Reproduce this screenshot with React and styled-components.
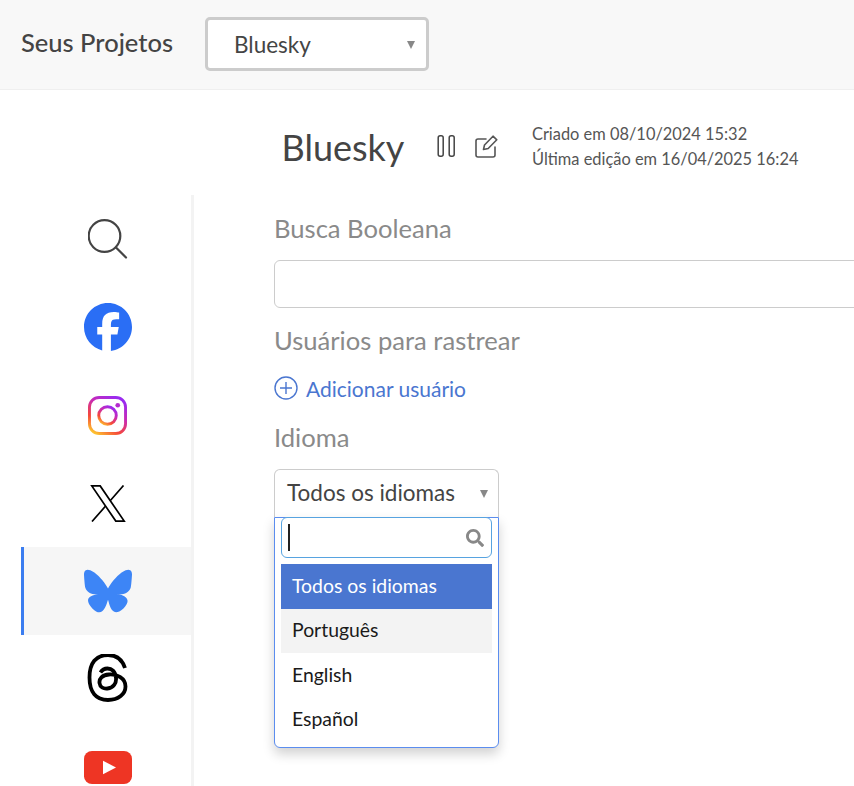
import styled, { createGlobalStyle } from "styled-components";
import { FaSearch } from "react-icons/fa";
import { SiBluesky, SiFacebook } from "react-icons/si";

const GlobalStyle = createGlobalStyle`
  html, body {
    margin: 0;
    padding: 0;
    height: 100%;
    overflow: hidden;
    background: #fff;
    font-family: Lato, "Open Sans", sans-serif;
  }
`;

const SearchIcon = () => (
  <svg width="40" height="40" viewBox="0 0 40 40" fill="none" stroke="#444" strokeWidth="2.2" strokeLinecap="round">
    <circle cx="16.5" cy="17" r="15.8" />
    <path d="M28 28.5l10 10" />
  </svg>
);

const InstagramIcon = () => (
  <svg width="39" height="39" viewBox="0 0 40 40" fill="none">
    <defs>
      <linearGradient id="ig" x1="0.15" y1="1" x2="0.75" y2="0">
        <stop offset="0" stopColor="#fdc32f" />
        <stop offset="0.3" stopColor="#f5483a" />
        <stop offset="0.65" stopColor="#c92bb4" />
        <stop offset="1" stopColor="#9a2bf0" />
      </linearGradient>
    </defs>
    <rect x="1.5" y="1.5" width="37" height="37" rx="10" stroke="url(#ig)" strokeWidth="3" />
    <circle cx="20" cy="20" r="9" stroke="url(#ig)" strokeWidth="3" />
    <circle cx="30.5" cy="9.5" r="2.4" fill="#b52bcf" />
  </svg>
);

const XIcon = () => (
  <svg width="36" height="37" viewBox="0 0 36 37" fill="none" stroke="#000" strokeWidth="1.7">
    <path d="M1.8 0.9h8.4l24 35.2h-8.4z" />
    <path d="M33.5 0.5L20.6 15.2M15.4 21.3L2 36.5" />
  </svg>
);

const ThreadsIcon = () => (
  <svg width="41" height="50" viewBox="0 1.5 41 50" fill="none" stroke="#000" strokeWidth="3.8">
    <path d="M38 15.5C35 6.5 29 2.5 21 2.5 9 2.5 2.5 10.5 2.5 25 2.5 39.5 9 47.5 21 47.5 31.5 47.5 38.5 41.5 38.5 34 38.5 25.5 30 21.5 22 22 15 22.5 12 26.5 12.5 30.5 13 34.5 16.5 36.5 20.5 36 26.5 35.5 29.5 30.5 29 25.5 28.5 18.5 24.5 16 20.5 16 17.5 16 15 17.5 13.5 20" />
  </svg>
);

const YoutubeIcon = () => (
  <svg width="48" height="33" viewBox="0 0 48 34" preserveAspectRatio="none">
    <rect width="48" height="34" rx="8" fill="#ee3524" />
    <path d="M19 10l13 7-13 7z" fill="#fff" />
  </svg>
);

const PauseIcon = () => (
  <svg width="19" height="22" viewBox="0 0 19 22" fill="none" stroke="#444" strokeWidth="1.5">
    <rect x="1.2" y="0.8" width="5" height="20.4" rx="2" />
    <rect x="12.2" y="0.8" width="5" height="20.4" rx="2" />
  </svg>
);

const EditIcon = () => (
  <svg width="23" height="23" viewBox="0 0 23 23" fill="none" stroke="#555" strokeWidth="1.6" strokeLinejoin="round" strokeLinecap="round">
    <path d="M11 4H3a2 2 0 0 0-2 2v14a2 2 0 0 0 2 2h15a2 2 0 0 0 2-2v-8" />
    <path d="M8.5 14.5l1-4.500L18 1.2l3.800 3.600-8.600 8.700z" />
  </svg>
);

const PlusIcon = () => (
  <svg width="24" height="24" viewBox="0 0 24 24" fill="none" stroke="#4a76d0" strokeWidth="1.4">
    <circle cx="12" cy="12" r="11" />
    <path d="M12 6v12M6 12h12" />
  </svg>
);

const TopBar = styled.header`
  height: 90px;
  box-sizing: border-box;
  padding: 17px 0 0 21px;
  display: flex;
  align-items: flex-start;
  background: #f8f8f8;
  border-bottom: 1px solid #efefef;
`;

const TopTitle = styled.div`
  width: 184px;
  font-size: 25.5px;
  font-weight: 500;
  line-height: 50px;
  color: #444;
`;

const ProjectSelect = styled.div`
  position: relative;
  width: 224px;
  height: 54px;
  box-sizing: border-box;
  padding-left: 26px;
  display: flex;
  align-items: center;
  background: #fff;
  border: 3px solid #ccc;
  border-radius: 5px;
  font-size: 22.5px;
  color: #444;
`;

const Caret = styled.span`
  position: absolute;
  right: ${(p) => p.$right}px;
  top: ${(p) => p.$top}px;
  width: 0;
  height: 0;
  border-left: 4.5px solid transparent;
  border-right: 4.5px solid transparent;
  border-top: 8px solid #888;
`;

const ProjectHeader = styled.div`
  height: 105px;
  box-sizing: border-box;
  padding: 9px 0 0 281.5px;
  display: flex;
  align-items: center;
`;

const ProjectName = styled.h1`
  margin: 0;
  width: 155px;
  font-size: 36px;
  font-weight: 400;
  color: #444;
`;

const HeaderIcons = styled.div`
  width: 95.5px;
  display: flex;
  align-items: center;
  gap: 19.5px;
  margin-top: -2px;
`;

const Meta = styled.div`
  font-size: 16.4px;
  line-height: 25px;
  color: #555;
  margin-top: -3px;
`;

const Body = styled.div`
  display: flex;
  align-items: flex-start;
`;

const Sidebar = styled.nav`
  width: 173px;
  height: 600px;
  margin-left: 21px;
  flex: none;
  border-right: 3px solid #f3f3f3;
  box-sizing: border-box;
`;

const SideItem = styled.div`
  height: 88px;
  display: flex;
  align-items: center;
  justify-content: center;
  box-sizing: border-box;
  border-left: 3px solid ${(p) => (p.$active ? "#3b7df0" : "transparent")};
  background: ${(p) => (p.$active ? "#f6f6f6" : "transparent")};
`;

const Main = styled.main`
  flex: 1;
  padding: 17px 0 0 80px;
  margin-right: -40px;
  min-width: 0;
`;

const FieldLabel = styled.div`
  font-size: 25.6px;
  line-height: 32px;
  color: #8a8a8a;
`;

const TextInput = styled.div`
  height: 48px;
  box-sizing: border-box;
  margin: 16px 0 16px;
  border: 1px solid #ccc;
  border-radius: 6px;
  background: #fff;
`;

const AddUser = styled.div`
  display: flex;
  align-items: center;
  gap: 8px;
  margin: 20px 0 21px;
  height: 24px;
  font-size: 21px;
  color: #4a76d0;
`;

const LangField = styled.div`
  position: relative;
  width: 225px;
  margin-top: 16px;
`;

const LangSelect = styled.div`
  height: 48px;
  box-sizing: border-box;
  padding: 0 0 2px 12px;
  display: flex;
  align-items: center;
  border: 1px solid #ccc;
  border-bottom: none;
  border-radius: 6px 6px 0 0;
  font-size: 22.5px;
  color: #444;
`;

const Dropdown = styled.div`
  position: absolute;
  left: 0;
  right: 0;
  top: 48px;
  height: 231px;
  box-sizing: border-box;
  padding: 0 6px;
  background: #fff;
  border: 1px solid #5b8def;
  border-radius: 0 0 6px 6px;
  box-shadow: 0 6px 12px rgba(0, 0, 0, 0.18);
`;

const DropSearch = styled.div`
  height: 41px;
  box-sizing: border-box;
  margin: -1px 0 6px;
  padding: 0 7px 0 6px;
  display: flex;
  align-items: center;
  justify-content: space-between;
  background: #fff;
  border: 1px solid #57a3e0;
  border-radius: 6px;
  color: #888;
`;

const TextCursor = styled.span`
  width: 2px;
  height: 27px;
  background: #222;
`;

const Option = styled.div`
  height: 44.5px;
  box-sizing: border-box;
  padding: 0 11px 2px;
  display: flex;
  align-items: center;
  font-size: 19.4px;
  color: ${(p) => (p.$selected ? "#fff" : "#1a1a1a")};
  background: ${(p) => (p.$selected ? "#4a76d0" : p.$hover ? "#f3f3f3" : "transparent")};
`;

const App = () => (
  <>
    <GlobalStyle />
    <TopBar>
      <TopTitle>Seus Projetos</TopTitle>
      <ProjectSelect>
        Bluesky
        <Caret $right={11} $top={21} />
      </ProjectSelect>
    </TopBar>
    <ProjectHeader>
      <ProjectName>Bluesky</ProjectName>
      <HeaderIcons>
        <PauseIcon />
        <EditIcon />
      </HeaderIcons>
      <Meta>
        Criado em 08/10/2024 15:32
        <br />
        Última edição em 16/04/2025 16:24
      </Meta>
    </ProjectHeader>
    <Body>
      <Sidebar>
        <SideItem><SearchIcon /></SideItem>
        <SideItem><SiFacebook size={48} color="#2a6ef5" /></SideItem>
        <SideItem><InstagramIcon /></SideItem>
        <SideItem><XIcon /></SideItem>
        <SideItem $active><SiBluesky size={48} color="#3d85f6" /></SideItem>
        <SideItem><ThreadsIcon /></SideItem>
        <SideItem><YoutubeIcon /></SideItem>
      </Sidebar>
      <Main>
        <FieldLabel>Busca Booleana</FieldLabel>
        <TextInput />
        <FieldLabel>Usuários para rastrear</FieldLabel>
        <AddUser>
          <PlusIcon />
          Adicionar usuário
        </AddUser>
        <FieldLabel>Idioma</FieldLabel>
        <LangField>
          <LangSelect>
            Todos os idiomas
            <Caret $right={11} $top={21} />
          </LangSelect>
          <Dropdown>
            <DropSearch>
              <TextCursor />
              <FaSearch size={18} />
            </DropSearch>
            <Option $selected>Todos os idiomas</Option>
            <Option $hover>Português</Option>
            <Option>English</Option>
            <Option>Español</Option>
          </Dropdown>
        </LangField>
      </Main>
    </Body>
  </>
);

export default App;
